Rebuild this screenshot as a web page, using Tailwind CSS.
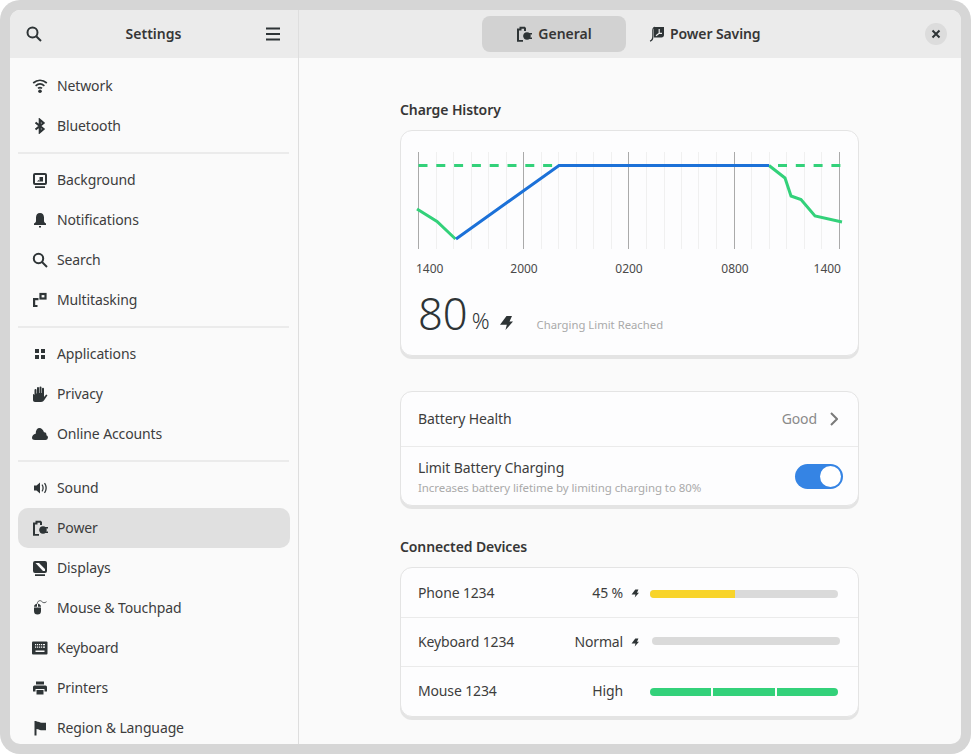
<!DOCTYPE html>
<html lang="en">
<head>
    <meta charset="UTF-8">
    <title>Settings - Power</title>
    <script src="https://cdn.jsdelivr.net/npm/@tailwindcss/browser@4"></script>
</head>
<body class="bg-white overflow-hidden">
<div class="w-[971px] h-[754px] p-[10px] bg-[#d6d6d6] rounded-[20px] font-['Noto_Sans',sans-serif] text-[#3d3d3d]">
  <div class="flex h-full rounded-[10px] overflow-hidden bg-[#fafafa]">

    <!-- Sidebar -->
    <aside class="w-[289px] shrink-0 border-r border-[#dedede] flex flex-col">
      <header class="h-[48px] shrink-0 bg-[#ebebeb] flex items-center justify-between pl-[16px] pr-[17px]">
        <svg class="w-4 h-4" viewBox="0 0 16 16" fill="none" stroke="#2e3436" stroke-width="2"><circle cx="6.5" cy="6.5" r="5"/><path d="M10.2 10.2L15 15"/></svg>
        <h1 class="text-[14px] font-semibold text-[#363636] pb-[2px]">Settings</h1>
        <svg class="w-4 h-4" viewBox="0 0 16 16" fill="none" stroke="#2e3436" stroke-width="1.9"><path d="M1 2.5h14M1 8h14M1 13.5h14"/></svg>
      </header>
      <nav class="flex-1 px-2 pt-2 text-[14px] tracking-[-0.12px] overflow-hidden">
        <a class="h-10 flex items-center gap-[9px] pl-[14px]">
          <svg class="w-4 h-4 shrink-0" viewBox="0 0 16 16" fill="none" stroke="#2e3436" stroke-width="1.7"><path d="M1.2 5C5.3 1.6 10.7 1.6 14.8 5M3.6 7.8C6.3 5.5 9.7 5.5 12.4 7.8M6 10.4C7.2 9.4 8.8 9.4 10 10.4"/><circle cx="8" cy="13.2" r="1.8" fill="#2e3436" stroke="none"/></svg>
          <span class="pb-[2px]">Network</span></a>
        <a class="h-10 flex items-center gap-[9px] pl-[14px]">
          <svg class="w-4 h-4 shrink-0" viewBox="0 0 16 16" fill="none" stroke="#2e3436" stroke-width="2.2"><path d="M3.5 4.500L11.500 11L7.800 14.200V1.800L11.500 5L3.500 11.500"/></svg>
          <span class="pb-[2px]">Bluetooth</span></a>
        <div class="h-[2px] my-[6px] mr-px bg-[#ebebeb]"></div>
        <a class="h-10 flex items-center gap-[9px] pl-[14px]">
          <svg class="w-4 h-4 shrink-0" viewBox="0 0 16 16" fill="#2e3436"><path fill-rule="evenodd" d="M3 1h10a2 2 0 0 1 2 2v8a2 2 0 0 1-2 2H3a2 2 0 0 1-2-2V3a2 2 0 0 1 2-2zm0 2v8h10V3z"/><path d="M5 9.500l1.500-1.500 1 1V5H11v4.500zM3 14.300h10V16H3z"/></svg>
          <span class="pb-[2px]">Background</span></a>
        <a class="h-10 flex items-center gap-[9px] pl-[14px]">
          <svg class="w-4 h-4 shrink-0" viewBox="0 0 16 16" fill="#2e3436"><path d="M8 1C5.300 1 4 3 4 5.500V9c0 1-1 2-2 2.500V13h12v-1.500C13 11 12 10 12 9V5.500C12 3 10.700 1 8 1zM7 14h2v1.500H7z"/></svg>
          <span class="pb-[2px]">Notifications</span></a>
        <a class="h-10 flex items-center gap-[9px] pl-[14px]">
          <svg class="w-4 h-4 shrink-0" viewBox="0 0 16 16" fill="none" stroke="#2e3436" stroke-width="2"><circle cx="6.500" cy="6.500" r="4.700"/><path d="M10 10L15 15"/></svg>
          <span class="pb-[2px]">Search</span></a>
        <a class="h-10 flex items-center gap-[9px] pl-[14px]">
          <svg class="w-4 h-4 shrink-0" viewBox="0 0 16 16" fill="none" stroke="#2e3436" stroke-width="2.200"><rect x="8.500" y="2" width="5" height="4.500"/><path d="M2.100 15V7.100H6.500M1 14H5.500"/></svg>
          <span class="pb-[2px]">Multitasking</span></a>
        <div class="h-[2px] my-[6px] mr-px bg-[#ebebeb]"></div>
        <a class="h-10 flex items-center gap-[9px] pl-[14px]">
          <svg class="w-4 h-4 shrink-0" viewBox="0 0 16 16" fill="#2e3436"><rect x="3" y="3" width="4" height="4"/><rect x="9" y="3" width="4" height="4"/><rect x="3" y="9" width="4" height="4"/><rect x="9" y="9" width="4" height="4"/></svg>
          <span class="pb-[2px]">Applications</span></a>
        <a class="h-10 flex items-center gap-[9px] pl-[14px]">
          <svg class="w-4 h-4 shrink-0" viewBox="0 0 16 16" fill="#2e3436"><path d="M1 8.500V14c0 1 .8 2 2 2h6c1.500 0 2.500-.8 3.300-2l3.200-4.800-1.300-.7L12 11V2.800a1 1 0 0 0-2 0V7H9.500V1.500a1 1 0 0 0-2 0V7H7V2a1 1 0 0 0-2 0v5.500h-.5V4a1 1 0 0 0-2 0v5H2.300V8.500a.7.7 0 0 0-1.300 0z"/></svg>
          <span class="pb-[2px]">Privacy</span></a>
        <a class="h-10 flex items-center gap-[9px] pl-[14px]">
          <svg class="w-4 h-4 shrink-0" viewBox="0 0 16 16" fill="#2e3436"><path d="M3 14h10.500a2.500 2.500 0 0 0 .9-4.800C14.700 6.800 13.200 6 12 6.300 11.200 3.800 9.300 2 7.500 2 5.300 2 3.700 4 3.700 7.800 1.400 8.400 0 10 0 11.700 0 13 1.200 14 3 14z"/></svg>
          <span class="pb-[2px]">Online Accounts</span></a>
        <div class="h-[2px] my-[6px] mr-px bg-[#ebebeb]"></div>
        <a class="h-10 flex items-center gap-[9px] pl-[14px]">
          <svg class="w-4 h-4 shrink-0" viewBox="0 0 16 16" fill="#2e3436"><path d="M2 5.500h2.500L8 2.500v11L4.500 10.500H2z"/><path d="M9.500 5c1.300 1.500 1.300 4.500 0 6l.9.700c1.800-2 1.800-5.400 0-7.400zM12 3.500c2 2.500 2 6.500 0 9l1 .7c2.400-3 2.400-7.400 0-10.400z"/></svg>
          <span class="pb-[2px]">Sound</span></a>
        <a class="h-10 flex items-center gap-[9px] pl-[14px] rounded-[10px] bg-[#e0e0e0]">
          <svg class="w-4 h-4 shrink-0" viewBox="0 0 16 16" fill="#2e3436"><path d="M1 2.500h2.500V.7H9l1 1.500V5H8V2.700H5.500V4.500H3V14h4v1.700H1z"/><circle cx="11" cy="10" r="3.700"/><path d="M7.500 9.200H10v1.600H7.500zM12 7h4v1.500h-4zM12 11.500h4V13h-4z"/></svg>
          <span class="pb-[2px]">Power</span></a>
        <a class="h-10 flex items-center gap-[9px] pl-[14px]">
          <svg class="w-4 h-4 shrink-0" viewBox="0 0 16 16" fill="#2e3436"><path fill-rule="evenodd" d="M3 1h10a2 2 0 0 1 2 2v8a2 2 0 0 1-2 2H3a2 2 0 0 1-2-2V3a2 2 0 0 1 2-2zm.5 2L11 11h2V9L7 3z"/><path d="M3 14.300h10V16H3z"/></svg>
          <span class="pb-[2px]">Displays</span></a>
        <a class="h-10 flex items-center gap-[9px] pl-[14px]">
          <svg class="w-4 h-4 shrink-0" viewBox="0 0 16 16" fill="#2e3436"><path d="M2 7.500h7V11a3.500 3.500 0 0 1-7 0zM2 6.700C2 5 3.500 4 5 3.800v2.900zM6 3.800C7.500 4 9 5 9 6.700H6z"/><path d="M5.300 3.800c0-3 3-4 4.500-2.300 1.200 1.400 2.800 1.800 4.700.2" fill="none" stroke="#2e3436" stroke-width=".8"/></svg>
          <span class="pb-[2px]">Mouse &amp; Touchpad</span></a>
        <a class="h-10 flex items-center gap-[9px] pl-[14px]">
          <svg class="w-4 h-4 shrink-0" viewBox="0 0 16 16"><rect y="1.500" width="15.500" height="13" rx="1" fill="#2e3436"/><path d="M3 4h10v1.200H3zM3 6.500h10v1.200H3zM3.500 10.500h9V12h-9z" fill="#fafafa"/><path d="M4.500 3.500v5M6.500 3.500v5M8.500 3.500v5M10.500 3.500v5" stroke="#2e3436" stroke-width=".8"/></svg>
          <span class="pb-[2px]">Keyboard</span></a>
        <a class="h-10 flex items-center gap-[9px] pl-[14px]">
          <svg class="w-4 h-4 shrink-0" viewBox="0 0 16 16" fill="#2e3436"><path d="M4 1.500h8v3H4zM2.500 5.500h11A1.500 1.500 0 0 1 15 7v4.500h-2.500V9h-9v2.500H1V7a1.500 1.500 0 0 1 1.500-1.500zM4.500 10h7v4.500h-7z"/></svg>
          <span class="pb-[2px]">Printers</span></a>
        <a class="h-10 flex items-center gap-[9px] pl-[14px]">
          <svg class="w-4 h-4 shrink-0" viewBox="0 0 16 16" fill="#2e3436"><path d="M2.500 1h2v14.500h-2zM4.500 1.500c2.500 0 3 1.200 5 1.200H14v7.500H9c-2 0-2.200-1.200-4.500-1.200z"/></svg>
          <span class="pb-[2px]">Region &amp; Language</span></a>
      </nav>
    </aside>

    <!-- Main -->
    <main class="flex-1 flex flex-col min-w-0">
      <header class="relative h-[48px] shrink-0 bg-[#ebebeb] flex items-center justify-center text-[14px] font-semibold text-[#363636]">
        <div class="w-[144px] h-[36px] rounded-[8px] bg-[#d2d2d2] flex items-center justify-center gap-[6px]">
          <svg class="w-4 h-4 shrink-0" viewBox="0 0 16 16" fill="#2e3436"><path d="M1 2.500h2.500V.7H9l1 1.500V5H8V2.700H5.500V4.500H3V14h4v1.700H1z"/><circle cx="11" cy="10" r="3.700"/><path d="M7.500 9.200H10v1.600H7.500zM12 7h4v1.500h-4zM12 11.500h4V13h-4z"/></svg>
          <span class="pb-[2px]">General</span></div>
        <div class="w-[152px] h-[36px] flex items-center gap-[5px] pl-[23px] tracking-[-0.1px]">
          <svg class="w-4 h-4 shrink-0" viewBox="0 0 16 16"><path d="M1 15.200C3.200 14.600 3.900 13 3.900 10V4.500C3.900 2.500 4.500 1.500 6 1.500" fill="none" stroke="#2e3436" stroke-width="1.300"/><path d="M5 1h10v8c0 1.500-1 2.500-2.500 2.500H5z" fill="#2e3436"/><path d="M7 9.800L10.200 7.300V3M10.200 7.300H13" fill="none" stroke="#ebebeb" stroke-width="1.200"/></svg>
          <span class="pb-[2px]">Power Saving</span></div>
        <button class="absolute right-[14px] top-[13px] w-[22px] h-[22px] rounded-full bg-[#dcdcdc] flex items-center justify-center">
          <svg class="w-[10px] h-[10px]" viewBox="0 0 10 10" fill="none" stroke="#2e3436" stroke-width="2"><path d="M1.500 1.500l7 7M8.500 1.500l-7 7"/></svg>
        </button>
      </header>

      <div class="flex-1 overflow-hidden pt-[42px]">
        <div class="w-[459px] ml-[101px]">
          <h2 class="text-[14px] font-semibold text-[#363636] leading-5 tracking-[-0.1px]">Charge History</h2>

          <section class="mt-[10px] h-[226px] rounded-[12px] border border-[#e4e4e4] bg-[#fdfdfe] shadow-[0_3px_0_#e4e4e4] pt-[19px] pl-[14px]">
            <svg class="block" width="432" height="130" viewBox="415 150 432 130" fill="none">
              <g stroke="#f0f0f0" stroke-width="1">
                <path d="M436.500 152V249M453.500 152V249M471.500 152V249M488.500 152V249M506.500 152V249M541.500 152V249M558.500 152V249M576.500 152V249M593.500 152V249M611.500 152V249M646.500 152V249M664.500 152V249M681.500 152V249M698.500 152V249M716.500 152V249M751.500 152V249M769.500 152V249M786.500 152V249M804.500 152V249M821.500 152V249"/>
              </g>
              <g stroke="#aaaaaa" stroke-width="1">
                <path d="M418.500 152V249M523.500 152V249M628.500 152V249M734.500 152V249M839.500 152V249"/>
              </g>
              <path d="M418.500 165.500H559M778 165.500H841" stroke="#33d17a" stroke-width="3" stroke-dasharray="9 8.800"/>
              <path d="M417 209L437 221.500L455.500 239" stroke="#33d17a" stroke-width="3"/>
              <path d="M769 165.500L785 178L791 196L801 199.500L815 216L842 222" stroke="#33d17a" stroke-width="3"/>
              <path d="M456 239L559 165.500H769" stroke="#1c71d8" stroke-width="3"/>
              <g fill="#4a4a4a" font-size="12" font-family="Noto Sans">
                <text x="416" y="273">1400</text>
                <text x="524" y="273" text-anchor="middle">2000</text>
                <text x="629" y="273" text-anchor="middle">0200</text>
                <text x="735" y="273" text-anchor="middle">0800</text>
                <text x="841" y="273" text-anchor="end">1400</text>
              </g>
            </svg>
            <div class="flex items-baseline pl-[3px] mt-[8px]">
              <span class="text-[43.500px] leading-[50px] font-light text-[#2e3436]">80</span>
              <span class="text-[22px] ml-[4px] font-light text-[#2e3436] -translate-y-px">%</span>
              <svg class="w-[14px] h-[14px] ml-[9px] self-center mt-[20px]" viewBox="0 0 14 14" fill="#2e3436"><path d="M7.500 0H13L10.500 5.500H14L6.500 14L7.800 8.800H1Z"/></svg>
              <span class="ml-[24px] text-[11.300px] text-[#aaaaaa] -translate-y-px">Charging Limit Reached</span>
            </div>
          </section>

          <section class="mt-[35px] rounded-[12px] border border-[#e4e4e4] bg-[#fdfdfe] shadow-[0_3px_0_#e4e4e4] text-[14px] tracking-[-0.1px]">
            <div class="h-[55px] flex items-center justify-between pl-[17px] pr-[20px] border-b border-[#ebebeb]">
              <span class="pb-[2px]">Battery Health</span>
              <span class="flex items-center gap-[13px] text-[#8a8a8a]"><span class="pb-[2px]">Good</span>
                <svg class="w-[8px] h-[14px]" viewBox="0 0 8 14" fill="none" stroke="#7a7a7a" stroke-width="2"><path d="M1 1l6 6-6 6"/></svg>
              </span>
            </div>
            <div class="h-[58px] flex items-center justify-between pl-[17px] pr-[15px]">
              <div class="pt-[2px]">
                <div class="leading-5">Limit Battery Charging</div>
                <div class="mt-[2px] text-[11.500px] leading-4 text-[#aaaaaa] tracking-[-0.08px]">Increases battery lifetime by limiting charging to 80%</div>
              </div>
              <div class="w-[48px] h-[25px] rounded-full bg-[#3584e4] flex items-center justify-end pr-[2px]">
                <div class="w-[21px] h-[21px] rounded-full bg-white"></div>
              </div>
            </div>
          </section>

          <h2 class="mt-[31px] text-[14px] font-semibold text-[#363636] leading-5 tracking-[-0.1px]">Connected Devices</h2>

          <section class="mt-[10px] rounded-[12px] border border-[#e4e4e4] bg-[#fdfdfe] shadow-[0_3px_0_#e4e4e4] text-[14px] tracking-[-0.15px]">
            <div class="h-[50px] flex items-center pt-[2px] pl-[17px] pr-[20px] border-b border-[#ebebeb]">
              <span class="flex-1 pb-[2px]">Phone 1234</span>
              <span class="pb-[2px]">45 %</span>
              <span class="w-[27px] pl-[8px]"><svg class="w-[8px] h-[9px]" viewBox="0 0 14 14" fill="#2e3436"><path d="M7.500 0H13L10.500 5.500H14L6.500 14L7.800 8.800H1Z"/></svg></span>
              <div class="w-[188px] h-[8px] rounded-full bg-[#dadada] overflow-hidden"><div class="h-full bg-[#f8d42b]" style="width:45%"></div></div>
            </div>
            <div class="h-[49px] flex items-center pl-[17px] pr-[18px] border-b border-[#ebebeb]">
              <span class="flex-1 pb-[2px]">Keyboard 1234</span>
              <span class="pb-[2px]">Normal</span>
              <span class="w-[29px] pl-[8px]"><svg class="w-[8px] h-[9px]" viewBox="0 0 14 14" fill="#2e3436"><path d="M7.500 0H13L10.500 5.500H14L6.500 14L7.800 8.800H1Z"/></svg></span>
              <div class="w-[188px] h-[8px] mb-[2px] rounded-full bg-[#dadada]"></div>
            </div>
            <div class="h-[49px] flex items-center pl-[17px] pr-[20px]">
              <span class="flex-1 pb-[2px]">Mouse 1234</span>
              <span class="pb-[2px]">High</span>
              <span class="w-[27px]"></span>
              <div class="w-[188px] h-[8px] rounded-full overflow-hidden flex gap-[2px]">
                <div class="flex-1 bg-[#33d17a]"></div>
                <div class="flex-1 bg-[#33d17a]"></div>
                <div class="flex-1 bg-[#33d17a]"></div>
              </div>
            </div>
          </section>
        </div>
      </div>
    </main>
  </div>
</div>
</body>
</html>
